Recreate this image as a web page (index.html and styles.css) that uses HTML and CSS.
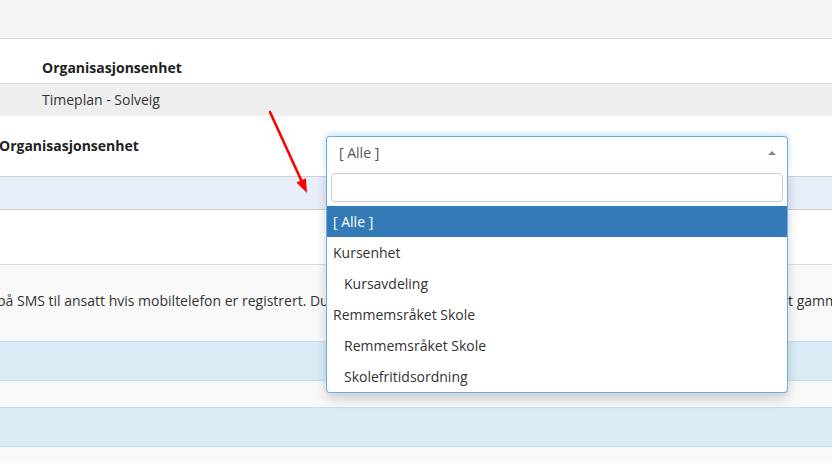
FILE: index.html
```html
<!DOCTYPE html>
<html lang="no">
<head>
<meta charset="utf-8">
<title>Organisasjonsenhet</title>
<link rel="stylesheet" href="styles.css">
</head>
<body>
<div class="page">
  <div class="topbar"></div>

  <div class="unit-table">
    <div class="unit-head">Organisasjonsenhet</div>
    <div class="unit-row">Timeplan - Solveig</div>
  </div>

  <div class="form-row">
    <div class="form-label">Organisasjonsenhet</div>
    <div class="select">
      <div class="select-box">
        <span class="select-value">[ Alle ]</span>
        <span class="select-arrow"></span>
      </div>
      <div class="dropdown">
        <div class="search-wrap"><input class="search" type="text"></div>
        <ul class="options">
          <li class="opt active">[ Alle ]</li>
          <li class="opt">Kursenhet</li>
          <li class="opt sub">Kursavdeling</li>
          <li class="opt">Remmemsråket Skole</li>
          <li class="opt sub">Remmemsråket Skole</li>
          <li class="opt sub">Skolefritidsordning</li>
        </ul>
      </div>
    </div>
  </div>

  <div class="sel-row"></div>
  <div class="blank-row"></div>

  <div class="sms-row"><span class="sms-a">på SMS til ansatt hvis mobiltelefon er registrert. Du kan også sende melding på e-post hvis</span><span class="sms-b">t gammel informasjon blir overskrevet.</span></div>

  <div class="info-row"></div>
  <div class="gap-row"></div>
  <div class="info-row"></div>
  <div class="gap-row last"></div>

  <svg class="annot" width="832" height="463" viewBox="0 0 832 463">
    <line x1="270" y1="112" x2="302" y2="182" stroke="#ff0000" stroke-width="2.6" stroke-linecap="round"/>
    <polygon points="307,193 296.4,182.6 305.9,178.2" fill="#ff0000"/>
  </svg>
</div>
</body>
</html>
```

FILE: styles.css
```css
* { box-sizing: border-box; }
html, body { margin: 0; padding: 0; }
body {
  font-family: "Open Sans", "Noto Sans", "Liberation Sans", sans-serif;
  font-size: 14px;
  line-height: 20px;
  color: #333;
  background: #fff;
  width: 832px;
  height: 463px;
  overflow: hidden;
}
.page { position: relative; width: 832px; height: 463px; overflow: hidden; }

.topbar {
  height: 39px;
  background: #f4f4f4;
  border-bottom: 1px solid #dcdcdc;
}

.unit-head {
  height: 45px;
  padding: 19px 0 0 42px;
  font-weight: 700;
  color: #222;
  border-bottom: 1px solid #dcdcdc;
}
.unit-row {
  height: 32px;
  padding: 6px 0 0 42px;
  background: #eeeeee;
}

.form-row {
  display: flex;
  align-items: flex-start;
  height: 60px;
  padding-top: 20px;
}
.form-label {
  width: 327px;
  margin-left: -1px;
  font-weight: 700;
  color: #222;
}
.select {
  position: relative;
  width: 462px;
  z-index: 5;
}
.select-box {
  height: 33px;
  border: 1px solid #66afe9;
  border-bottom: none;
  border-radius: 4px 4px 0 0;
  background: #fff;
  display: flex;
  align-items: center;
  justify-content: space-between;
  padding: 0 11px 0 12px;
  box-shadow: 0 -1px 7px rgba(102, 175, 233, 0.45);
}
.select-value { color: #555; }
.select-arrow {
  width: 0;
  height: 0;
  border-left: 4px solid transparent;
  border-right: 4px solid transparent;
  border-bottom: 4px solid #888;
  margin-top: -1px;
}
.dropdown {
  position: absolute;
  top: 100%;
  left: 0;
  right: 0;
  background: #fff;
  border: 1px solid #66afe9;
  border-top: none;
  border-radius: 0 0 4px 4px;
  box-shadow: 0 6px 12px rgba(0, 0, 0, 0.175);
}
.search-wrap { padding: 4px; }
.search {
  display: block;
  width: 100%;
  height: 29px;
  border: 1px solid #ccc;
  border-radius: 4px;
  margin: 0;
  padding: 0 6px;
  font: inherit;
  outline: none;
}
.options { list-style: none; margin: 0; padding: 0; }
.opt {
  height: 31px;
  line-height: 31px;
  padding-left: 6px;
  color: #333;
  white-space: nowrap;
}
.opt.sub { padding-left: 17px; }
.opt.active { background: #337ab7; color: #fff; }

.sel-row {
  height: 34px;
  background: #e8eefa;
  border-top: 1px solid #cfcfcf;
  border-bottom: 1px solid #cfcfcf;
}
.blank-row {
  height: 55px;
  border-bottom: 1px solid #dcdcdc;
}
.sms-row {
  height: 76px;
  padding-top: 26px;
  background: #f9f9f9;
  white-space: nowrap;
  overflow: hidden;
}
.sms-a {
  display: inline-block;
  width: 791px;
  margin-left: -3px;
  overflow: hidden;
  vertical-align: top;
}
.sms-b { display: inline-block; vertical-align: top; }
.info-row {
  height: 40px;
  background: #d9ecf6;
  border-top: 1px solid #bde1ef;
  border-bottom: 1px solid #bde1ef;
}
.gap-row {
  height: 26px;
  background: #f9f9f9;
}
.gap-row.last { height: 20px; }

.annot {
  position: absolute;
  left: 0;
  top: 0;
  pointer-events: none;
  z-index: 10;
}
```
